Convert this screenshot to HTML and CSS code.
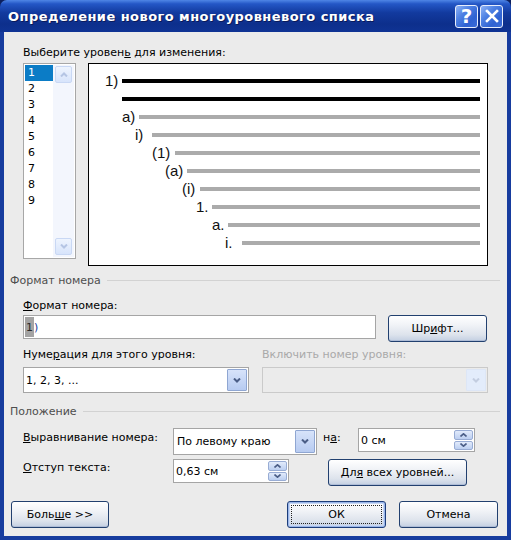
FILE: index.html
```html
<!DOCTYPE html>
<html lang="ru">
<head>
  <meta charset="UTF-8">
  <title>Определение нового многоуровневого списка</title>
  <link rel="stylesheet" href="styles.css">
</head>
<body>
  <div class="window">
    <div class="titlebar">
      <span class="title">Определение нового многоуровневого списка</span>
      <div class="caption">
        <span class="cap-btn help">?</span>
        <span class="cap-btn close">
          <svg width="14" height="14" viewBox="0 0 14 14"><path d="M2 2L12 12M12 2L2 12" stroke="#fff" stroke-width="2.6" stroke-linecap="square" fill="none"/></svg>
        </span>
      </div>
    </div>

    <div class="client">
      <div class="label indent">Выберите уровен<u>ь</u> для изменения:</div>

      <div class="top-row indent">
        <div class="listbox">
          <ul class="levels">
            <li class="selected">1</li>
            <li>2</li>
            <li>3</li>
            <li>4</li>
            <li>5</li>
            <li>6</li>
            <li>7</li>
            <li>8</li>
            <li>9</li>
          </ul>
          <div class="vscroll">
            <span class="sb-btn"><svg width="8" height="5" viewBox="0 0 8 5"><path d="M1 4.5L4 1.5L7 4.5" fill="none" stroke="currentColor" stroke-width="2"/></svg></span>
            <span class="sb-btn"><svg width="8" height="5" viewBox="0 0 8 5"><path d="M1 0.5L4 3.5L7 0.5" fill="none" stroke="currentColor" stroke-width="2"/></svg></span>
          </div>
        </div>

        <div class="preview">
          <div class="pv-row r1"><span class="num">1)</span><span class="bar dark"></span></div>
          <div class="pv-row r2"><span class="num"></span><span class="bar dark"></span></div>
          <div class="pv-row r3"><span class="num">a)</span><span class="bar"></span></div>
          <div class="pv-row r4"><span class="num">i)</span><span class="bar"></span></div>
          <div class="pv-row r5"><span class="num">(1)</span><span class="bar"></span></div>
          <div class="pv-row r6"><span class="num">(a)</span><span class="bar"></span></div>
          <div class="pv-row r7"><span class="num">(i)</span><span class="bar"></span></div>
          <div class="pv-row r8"><span class="num">1.</span><span class="bar"></span></div>
          <div class="pv-row r9"><span class="num">a.</span><span class="bar"></span></div>
          <div class="pv-row r10"><span class="num">i.</span><span class="bar"></span></div>
        </div>
      </div>

      <div class="group-head">Формат номера</div>

      <div class="label indent fmt-label"><u>Ф</u>ормат номера:</div>
      <div class="fmt-row indent">
        <div class="field fmt-field"><span class="code">1</span><span class="paren">)</span></div>
        <div class="btn font-btn"><span>Шр<u>и</u>фт...</span></div>
      </div>

      <div class="num-labels indent">
        <div class="label num-label">Нуме<u>р</u>ация для этого уровня:</div>
        <div class="label disabled">Включить номер уровня:</div>
      </div>
      <div class="num-row indent">
        <div class="combo style-combo">
          <span class="combo-text">1, 2, 3, ...</span>
          <span class="drop"><svg width="8" height="5" viewBox="0 0 8 5"><path d="M1 0.5L4 3.5L7 0.5" fill="none" stroke="currentColor" stroke-width="2"/></svg></span>
        </div>
        <div class="combo level-combo off">
          <span class="combo-text"></span>
          <span class="drop"><svg width="8" height="5" viewBox="0 0 8 5"><path d="M1 0.5L4 3.5L7 0.5" fill="none" stroke="currentColor" stroke-width="2"/></svg></span>
        </div>
      </div>

      <div class="group-head pos-head">Положение</div>

      <div class="pos-row first indent">
        <div class="label pos-label"><u>В</u>ыравнивание номера:</div>
        <div class="combo align-combo">
          <span class="combo-text">По левому краю</span>
          <span class="drop"><svg width="8" height="5" viewBox="0 0 8 5"><path d="M1 0.5L4 3.5L7 0.5" fill="none" stroke="currentColor" stroke-width="2"/></svg></span>
        </div>
        <div class="label at-label">н<u>а</u>:</div>
        <div class="spin at-spin">
          <span class="spin-text">0 см</span>
          <span class="spin-btns">
            <span class="spin-btn"><svg width="7" height="4" viewBox="0 0 7 4"><path d="M0.5 3.5L3.5 0.8L6.5 3.5" fill="none" stroke="currentColor" stroke-width="1.6"/></svg></span>
            <span class="spin-btn"><svg width="7" height="4" viewBox="0 0 7 4"><path d="M0.5 0.5L3.5 3.2L6.5 0.5" fill="none" stroke="currentColor" stroke-width="1.6"/></svg></span>
          </span>
        </div>
      </div>

      <div class="pos-row second indent">
        <div class="label pos-label"><u>О</u>тступ текста:</div>
        <div class="spin indent-spin">
          <span class="spin-text">0,63 см</span>
          <span class="spin-btns">
            <span class="spin-btn"><svg width="7" height="4" viewBox="0 0 7 4"><path d="M0.5 3.5L3.5 0.8L6.5 3.5" fill="none" stroke="currentColor" stroke-width="1.6"/></svg></span>
            <span class="spin-btn"><svg width="7" height="4" viewBox="0 0 7 4"><path d="M0.5 0.5L3.5 3.2L6.5 0.5" fill="none" stroke="currentColor" stroke-width="1.6"/></svg></span>
          </span>
        </div>
        <div class="btn all-btn"><span>Дл<u>я</u> всех уровней...</span></div>
      </div>

      <div class="footer">
        <div class="btn more-btn"><span>Боль<u>ш</u>е &gt;&gt;</span></div>
        <div class="footer-right">
          <div class="btn ok-btn"><span class="focus">ОК</span></div>
          <div class="btn"><span>Отмена</span></div>
        </div>
      </div>
    </div>
  </div>
</body>
</html>
```

FILE: styles.css
```css
* {
  box-sizing: border-box;
}

html, body {
  margin: 0;
  padding: 0;
  width: 511px;
  height: 540px;
  overflow: hidden;
  background: #0c1f5e;
  font-family: "DejaVu Sans", sans-serif;
  font-size: 11px;
  color: #000;
}

u {
  text-decoration: underline;
  text-underline-offset: 1px;
}

.window {
  width: 511px;
  height: 540px;
  display: flex;
  flex-direction: column;
}

/* title bar */
.titlebar {
  height: 32px;
  flex: none;
  display: flex;
  align-items: center;
  justify-content: space-between;
  padding: 0 8px 0 8px;
  border-radius: 7px 7px 0 0;
  background: linear-gradient(to bottom, #4f86e6 0%, #2457c6 12%, #123a9e 40%, #0d2f8c 75%, #0f3394 100%);
}

.title {
  color: #fff;
  font-weight: bold;
  font-size: 13px;
  letter-spacing: 0.45px;
  text-shadow: 1px 1px 0 #0a1a5a;
}

.caption {
  display: flex;
  gap: 2px;
}

.cap-btn {
  width: 23px;
  height: 23px;
  border: 1px solid #e8eefc;
  border-radius: 3px;
  background: linear-gradient(135deg, #8fb3f5 0%, #4f82e4 35%, #2f62d2 70%, #3a6cd8 100%);
  display: flex;
  align-items: center;
  justify-content: center;
  color: #fff;
}

.cap-btn.help {
  font-size: 20px;
  font-weight: bold;
  line-height: 1;
}

/* client area */
.client {
  flex: 1;
  background: #ebebeb;
  border: solid #173c9e;
  border-width: 0 4px 4px 4px;
  padding: 14px 7px 0 6px;
  display: flex;
  flex-direction: column;
}

.indent {
  margin-left: 13px;
}

.label {
  height: 13px;
  line-height: 13px;
  white-space: nowrap;
}

.label.disabled {
  color: #a9a9a9;
}

/* level list + preview */
.top-row {
  margin-top: 4px;
  display: flex;
  align-items: flex-start;
}

.listbox {
  width: 53px;
  height: 196px;
  border: 1px solid #a7a7a7;
  padding: 1px;
  background: #fff;
  display: flex;
}

.levels {
  list-style: none;
  margin: 0;
  padding: 0;
  width: 28px;
}

.levels li {
  height: 16px;
  line-height: 16px;
  padding-left: 3px;
}

.levels li.selected {
  background: #0b7cc6;
  color: #fff;
}

.vscroll {
  width: 21px;
  background: #f3f6fd;
  display: flex;
  flex-direction: column;
  justify-content: space-between;
  padding: 1px 2px 2px 2px;
}

.sb-btn {
  height: 17px;
  border: 1px solid #c9d8f4;
  border-radius: 2px;
  background: linear-gradient(to bottom, #eef4fe, #d7e4fb);
  color: #b5c5e4;
  display: flex;
  align-items: center;
  justify-content: center;
}

.preview {
  margin-left: 12px;
  width: 400px;
  height: 203px;
  border: 1px solid #000;
  background: #fff;
  padding: 8px 7px 0 0;
}

.pv-row {
  height: 18px;
  display: flex;
  align-items: center;
}

.num {
  flex: none;
  font-family: "Liberation Sans", sans-serif;
  font-size: 15px;
  line-height: 18px;
  color: #111;
}

.bar {
  flex: 1;
  height: 4px;
  background: #ababab;
}

.bar.dark {
  background: #000;
}

.r1 .num { margin-left: 16px; width: 17px; }
.r2 .num { margin-left: 33px; width: 0; }
.r3 .num { margin-left: 33px; width: 17px; }
.r4 .num { margin-left: 46px; width: 17px; }
.r5 .num { margin-left: 63px; width: 23px; }
.r6 .num { margin-left: 76px; width: 22px; }
.r7 .num { margin-left: 93px; width: 18px; }
.r8 .num { margin-left: 107px; width: 16px; }
.r9 .num { margin-left: 123px; width: 16px; }
.r10 .num { margin-left: 136px; width: 17px; }

/* group headings */
.group-head {
  margin-top: 8px;
  height: 13px;
  line-height: 13px;
  color: #4e4e4e;
  display: flex;
  align-items: center;
}

.group-head::after {
  content: "";
  flex: 1;
  height: 1px;
  background: #d2d2d2;
  margin-left: 6px;
}

.pos-head {
  margin-top: 12px;
}

/* number format */
.fmt-label {
  margin-top: 12px;
}

.fmt-row {
  margin-top: 3px;
  display: flex;
  align-items: flex-start;
}

.field {
  height: 24px;
  border: 1px solid #a5a5a5;
  background: #fff;
  display: flex;
  align-items: center;
}

.fmt-field {
  width: 353px;
  padding: 1px;
  align-items: stretch;
}

.fmt-field .code {
  background: #a3a3a3;
  color: #2a2a2a;
  padding: 0 1px;
  display: flex;
  align-items: center;
}

.fmt-field .paren {
  color: #1a3a9a;
  display: flex;
  align-items: center;
}

.btn {
  height: 27px;
  width: 99px;
  border: 1px solid #22406f;
  border-radius: 3px;
  background: linear-gradient(to bottom, #ffffff 0%, #f1f3f7 35%, #dde3ec 75%, #c3cfe2 100%);
  box-shadow: inset 0 -1px 0 #aebcd6;
  display: flex;
  align-items: center;
  justify-content: center;
  white-space: nowrap;
}

.font-btn {
  margin-left: 12px;
}

.num-labels {
  margin-top: 6px;
  display: flex;
}

.num-label {
  width: 239px;
}

.num-row {
  margin-top: 6px;
  display: flex;
}

.combo {
  height: 26px;
  border: 1px solid #a5a5a5;
  background: #fff;
  display: flex;
  align-items: center;
  padding: 1px;
}

.combo-text {
  flex: 1;
  padding-left: 1px;
}

.drop {
  width: 20px;
  align-self: stretch;
  border: 1px solid #8fa6d2;
  border-radius: 1px;
  background: linear-gradient(to bottom, #d7e3fa, #b7cbf1);
  color: #4a5d86;
  display: flex;
  align-items: center;
  justify-content: center;
}

.style-combo {
  width: 226px;
}

.level-combo {
  margin-left: 13px;
  width: 226px;
}

.combo.off {
  border-color: #cacaca;
  background: #ebebeb;
}

.combo.off .drop {
  border-color: #dde6f6;
  background: #e3ecfb;
  color: #c3cde0;
}

/* position */
.pos-row {
  display: flex;
  align-items: flex-start;
}

.pos-row.first {
  margin-top: 10px;
}

.pos-row.second {
  margin-top: 4px;
}

.pos-label {
  width: 150px;
  margin-top: 3px;
}

.pos-row.second .pos-label {
  margin-top: 2px;
}

.align-combo {
  width: 144px;
  height: 27px;
}

.align-combo .combo-text {
  padding-left: 2px;
}

.at-label {
  margin-left: 6px;
  width: 35px;
  margin-top: 3px;
}

.spin {
  height: 24px;
  border: 1px solid #a5a5a5;
  background: #fff;
  display: flex;
  align-items: center;
  padding: 1px;
}

.spin-text {
  flex: 1;
  padding-left: 1px;
}

.spin-btns {
  width: 19px;
  align-self: stretch;
  display: flex;
  flex-direction: column;
  gap: 1px;
}

.spin-btn {
  flex: 1;
  border: 1px solid #98acd4;
  border-radius: 2px;
  background: linear-gradient(to bottom, #e2ebfb, #bccff1);
  color: #4a5d86;
  display: flex;
  align-items: center;
  justify-content: center;
}

.at-spin {
  width: 117px;
}

.indent-spin {
  width: 116px;
}

.all-btn {
  margin-left: 39px;
  width: 139px;
}

/* footer buttons */
.footer {
  margin-top: 15px;
  display: flex;
  justify-content: space-between;
  padding: 0 2px 0 1px;
}

.more-btn {
  width: 98px;
}

.footer-right {
  display: flex;
  gap: 13px;
}

.footer-right .btn {
  width: 99px;
}

.ok-btn {
  border-color: #1c3d7a;
  box-shadow: inset 0 0 0 1px #9ab6ea, inset 0 0 0 2px #c6d6f3;
  padding: 3px;
}

.ok-btn .focus {
  flex: 1;
  align-self: stretch;
  border: 1px dotted #222;
  display: flex;
  align-items: center;
  justify-content: center;
}
```
